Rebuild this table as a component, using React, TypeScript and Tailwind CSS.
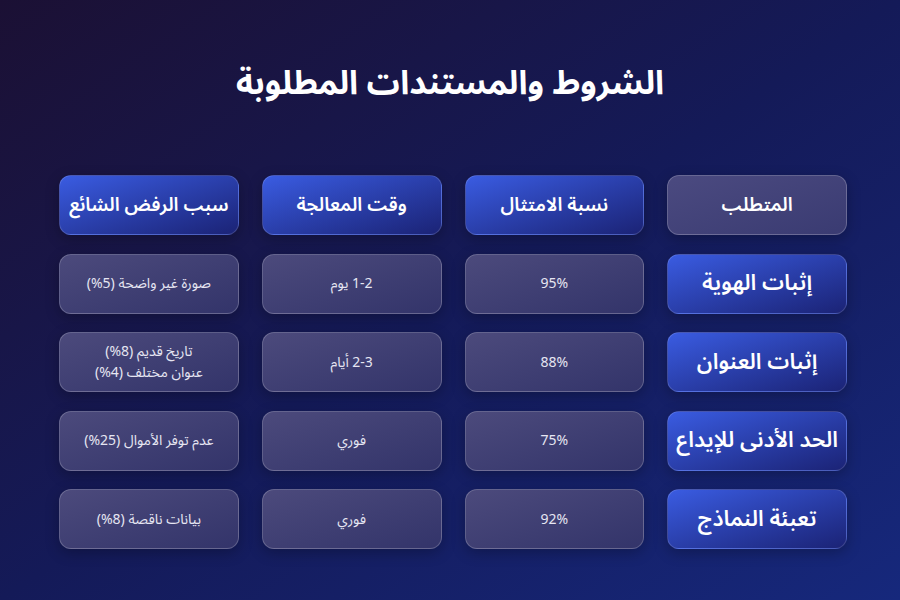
import React from "react";

const headers = ["المتطلب", "نسبة الامتثال", "وقت المعالجة", "سبب الرفض الشائع"];

const rows = [
  { label: "إثبات الهوية", rate: "95%", time: "1-2 يوم", reason: ["صورة غير واضحة (5%)"] },
  { label: "إثبات العنوان", rate: "88%", time: "2-3 أيام", reason: ["تاريخ قديم (8%)", "عنوان مختلف (4%)"] },
  { label: "الحد الأدنى للإيداع", rate: "75%", time: "فوري", reason: ["عدم توفر الأموال (25%)"] },
  { label: "تعبئة النماذج", rate: "92%", time: "فوري", reason: ["بيانات ناقصة (8%)"] },
];

const blueCell =
  "h-[60px] rounded-xl border border-white/15 bg-gradient-to-br from-[#3a5ce2] to-[#1b2376] flex items-center justify-center text-white whitespace-nowrap shadow-[0_4px_14px_rgba(0,0,0,0.25)]";
const grayCell =
  "h-[60px] rounded-xl border border-white/20 bg-gradient-to-br from-[#4c4a7c] to-[#33346a] flex items-center justify-center text-center text-[14px] leading-[21px] text-[#e6e6f2] shadow-[0_4px_14px_rgba(0,0,0,0.25)]";

export default function App() {
  return (
    <div
      dir="rtl"
      className="w-[900px] h-[600px] overflow-hidden bg-gradient-to-br from-[#1b1034] via-[#141a58] to-[#16287c] font-['Noto_Sans_Arabic','Noto_Sans','DejaVu_Sans',sans-serif]"
    >
      <h1 className="pt-[60px] text-center text-[33px] font-bold leading-[48px] text-white">
        الشروط والمستندات المطلوبة
      </h1>

      <div className="mt-[67px] pr-[53px] pl-[59px] grid grid-cols-4 gap-x-[23px] gap-y-[18.5px]">
        {headers.map((h, i) => (
          <div
            key={h}
            className={
              i === 0
                ? "h-[60px] rounded-xl border border-white/20 bg-gradient-to-br from-[#4b4a80] to-[#3a3b72] flex items-center justify-center text-white text-[19px] font-semibold shadow-[0_4px_14px_rgba(0,0,0,0.25)]"
                : `${blueCell} text-[19px] font-semibold`
            }
          >
            {h}
          </div>
        ))}

        {rows.map((r) => (
          <React.Fragment key={r.label}>
            <div className={`${blueCell} text-[22px] font-semibold`}>{r.label}</div>
            <div className={`${grayCell} text-[13px]`}>
              <span dir="ltr">{r.rate}</span>
            </div>
            <div className={grayCell}>{r.time}</div>
            <div className={grayCell}>
              <p>
                {r.reason.map((t, j) => (
                  <React.Fragment key={t}>
                    {j > 0 && <br />}
                    {t}
                  </React.Fragment>
                ))}
              </p>
            </div>
          </React.Fragment>
        ))}
      </div>
    </div>
  );
}
